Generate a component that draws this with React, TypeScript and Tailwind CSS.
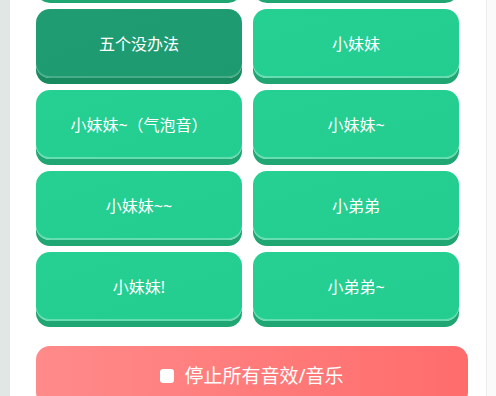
import React from 'react';

const sounds = [
  { label: '', active: false },
  { label: '', active: false },
  { label: '五个没办法', active: true },
  { label: '小妹妹', active: false },
  { label: '小妹妹~（气泡音）', active: false },
  { label: '小妹妹~', active: false },
  { label: '小妹妹~~', active: false },
  { label: '小弟弟', active: false },
  { label: '小妹妹!', active: false },
  { label: '小弟弟~', active: false },
];

export default function App() {
  return (
    <div
      className="flex h-[396px] w-[496px] overflow-hidden bg-white"
      style={{ fontFamily: '"Noto Sans", "Noto Sans CJK SC", sans-serif' }}
    >
      <div className="w-[10px] shrink-0 bg-[#e1e7e5]" />
      <div className="flex-1 pl-[26px] pr-[17px]">
        <div className="-mt-[72px] grid grid-cols-[206px_206px] gap-x-[11px] gap-y-[6px]">
          {sounds.map((s, i) => (
            <button
              key={i}
              className={`mb-[6px] flex h-[69px] items-center justify-center rounded-[14px] text-[16px] text-white ${
                s.active
                  ? 'bg-gradient-to-br from-[#1f9c72] to-[#1e9a70] shadow-[inset_0_-2px_0_rgba(255,255,255,0.18),0_6px_0_#188a5f]'
                  : 'bg-gradient-to-br from-[#26d093] to-[#23cc8f] shadow-[inset_0_-2px_0_rgba(255,255,255,0.3),0_6px_0_#1fa673]'
              }`}
            >
              {s.label}
            </button>
          ))}
        </div>
        <button className="mt-[19px] flex h-[60px] w-[432px] items-center justify-center gap-[10px] rounded-[14px] bg-gradient-to-r from-[#ff8a8a] to-[#ff6c6c] text-[19px] text-white">
          <span className="h-[14px] w-[14px] rounded-[3px] bg-white" />
          停止所有音效/音乐
        </button>
      </div>
      <div className="w-[10px] shrink-0 border-l border-[#ececec] bg-[#fafafa]" />
    </div>
  );
}
